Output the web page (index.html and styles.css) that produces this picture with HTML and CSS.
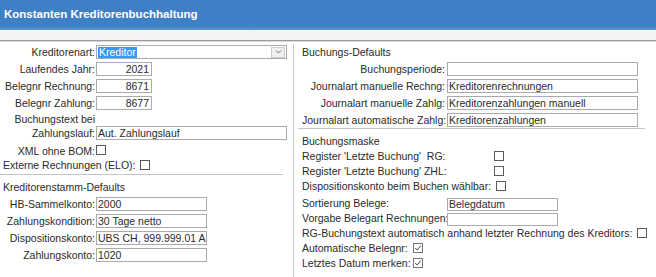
FILE: index.html
```html
<!DOCTYPE html>
<html lang="de">
<head>
    <meta charset="UTF-8">
    <meta name="viewport" content="width=device-width, initial-scale=1.0">
    <title>Konstanten Kreditorenbuchhaltung</title>
    <link rel="stylesheet" href="styles.css">
</head>
<body>
    <div class="titlebar">
        <h1>Konstanten Kreditorenbuchhaltung</h1>
    </div>
    <div class="toolbar"></div>

    <div class="content">
        <div class="col-left">
            <div class="row row-select">
                <span class="lbl">Kreditorenart:</span>
                <div class="select">
                    <span class="sel-text">Kreditor</span>
                    <span class="sel-btn">
                        <svg width="11" height="8" viewBox="0 0 11 8"><path d="M3 2.5 L5.5 5 L8 2.5" fill="none" stroke="#6b6b6b" stroke-width="1"/></svg>
                    </span>
                </div>
            </div>
            <div class="row">
                <span class="lbl">Laufendes Jahr:</span>
                <input class="field w-num" value="2021">
            </div>
            <div class="row">
                <span class="lbl">Belegnr Rechnung:</span>
                <input class="field w-num" value="8671">
            </div>
            <div class="row">
                <span class="lbl">Belegnr Zahlung:</span>
                <input class="field w-num" value="8677">
            </div>
            <div class="row row-tall">
                <span class="lbl">Buchungstext bei<br>Zahlungslauf:</span>
                <input class="field w-full" value="Aut. Zahlungslauf">
            </div>
            <div class="row row-cb first-cb">
                <span class="lbl">XML ohne BOM:</span>
                <span class="cb"></span>
            </div>
            <div class="line plain">Externe Rechnungen (ELO): <span class="cb gap"></span></div>

            <div class="sep sep-left"></div>

            <div class="heading heading-left">Kreditorenstamm-Defaults</div>
            <div class="row">
                <span class="lbl">HB-Sammelkonto:</span>
                <input class="field w-mid" value="2000">
            </div>
            <div class="row">
                <span class="lbl">Zahlungskondition:</span>
                <input class="field w-mid" value="30 Tage netto">
            </div>
            <div class="row">
                <span class="lbl">Dispositionskonto:</span>
                <input class="field w-mid" value="UBS CH, 999.999.01 A">
            </div>
            <div class="row">
                <span class="lbl">Zahlungskonto:</span>
                <input class="field w-mid" value="1020">
            </div>
        </div>

        <div class="col-right">
            <div class="heading">Buchungs-Defaults</div>
            <div class="row">
                <span class="lbl lbl-wide">Buchungsperiode:</span>
                <input class="field w-full" value="">
            </div>
            <div class="row">
                <span class="lbl lbl-wide">Journalart manuelle Rechng:</span>
                <input class="field w-full" value="Kreditorenrechnungen">
            </div>
            <div class="row">
                <span class="lbl lbl-wide">Journalart manuelle Zahlg:</span>
                <input class="field w-full" value="Kreditorenzahlungen manuell">
            </div>
            <div class="row">
                <span class="lbl lbl-wide">Journalart automatische Zahlg:</span>
                <input class="field w-full" value="Kreditorenzahlungen">
            </div>

            <div class="sep sep-right"></div>

            <div class="heading heading-mask">Buchungsmaske</div>
            <div class="line first-line"><span class="mlbl">Register 'Letzte Buchung'&nbsp; RG:</span><span class="cb"></span></div>
            <div class="line"><span class="mlbl">Register 'Letzte Buchung' ZHL:</span><span class="cb"></span></div>
            <div class="line">Dispositionskonto beim Buchen wählbar: <span class="cb gap"></span></div>
            <div class="line line-input first-input"><span class="ilbl">Sortierung Belege:</span><input class="field w-mid short" value="Belegdatum"></div>
            <div class="line"><span class="ilbl">Vorgabe Belegart Rechnungen:</span><input class="field w-mid short" value=""></div>
            <div class="line">RG-Buchungstext automatisch anhand letzter Rechnung des Kreditors: <span class="cb gap"></span></div>
            <div class="line">Automatische Belegnr: <span class="cb checked"><svg width="8" height="8" viewBox="0 0 8 8"><path d="M1.2 4 L3.2 6 L6.8 1.6" fill="none" stroke="#444" stroke-width="1"/></svg></span></div>
            <div class="line">Letztes Datum merken:<span class="cb checked"><svg width="8" height="8" viewBox="0 0 8 8"><path d="M1.2 4 L3.2 6 L6.8 1.6" fill="none" stroke="#444" stroke-width="1"/></svg></span></div>
        </div>
    </div>
</body>
</html>
```

FILE: styles.css
```css
body {
    margin: 0;
    font-family: "Liberation Sans", Arial, sans-serif;
    font-size: 10.5px;
    color: #2a2a2a;
    background: #fff;
}
.titlebar {
    height: 30px;
    box-sizing: border-box;
    padding: 0 0 2px 4px;
    display: flex;
    align-items: center;
    background: linear-gradient(#3e7fc5 0, #3e7fc5 26px, #6196cf 30px);
}
.titlebar h1 {
    margin: 0;
    font-size: 11.5px;
    font-weight: bold;
    color: #fff;
}
.toolbar {
    height: 10px;
    background: #f3f3f3;
    border-bottom: 1px solid #9b9b9b;
    box-shadow: 0 1px 0 #dadada;
}
.content {
    display: flex;
    box-sizing: border-box;
    height: 236px;
    padding-top: 3px;
}
.col-left {
    width: 293px;
    flex-shrink: 0;
}
.col-right {
    flex: 1;
    border-left: 1px solid #cacaca;
    padding-left: 8px;
}
.row {
    display: flex;
    align-items: center;
    height: 17px;
    white-space: nowrap;
}
.lbl {
    width: 95px;
    flex-shrink: 0;
    margin-right: 1px;
    text-align: right;
}
.lbl-wide {
    width: 143px;
    margin-right: 2px;
}
.row-select {
    height: 16px;
}
.row-tall {
    height: 29px;
    align-items: flex-end;
}
.row-tall .lbl {
    line-height: 14px;
}
.row-cb {
    height: 15px;
}
.first-cb {
    margin-top: 3px;
}
.line {
    height: 15px;
    line-height: 15px;
    white-space: nowrap;
}
.plain {
    padding-left: 3px;
}
.field {
    box-sizing: border-box;
    height: 14px;
    margin: 0;
    padding: 0 2px 0 1px;
    border: 1px solid #ababab;
    font: inherit;
    color: #2a2a2a;
    background: #fff;
    outline: none;
    vertical-align: middle;
}
.field.short {
    height: 13px;
}
.w-num {
    width: 56px;
    text-align: right;
}
.w-mid {
    width: 111px;
    padding-right: 0;
}
.w-full {
    width: 191px;
}
.select {
    display: flex;
    align-items: center;
    box-sizing: border-box;
    width: 191px;
    height: 14px;
    border: 1px solid #ababab;
    background: #fff;
}
.sel-text {
    margin-left: 1px;
    padding: 0 1px;
    line-height: 11px;
    background: #3399ff;
    color: #fff;
}
.sel-btn {
    display: flex;
    align-items: center;
    justify-content: center;
    box-sizing: border-box;
    width: 14px;
    height: 11px;
    margin-left: auto;
    margin-right: 1px;
    border: 1px solid #cdcdcd;
    background: #efefef;
}
.cb {
    display: inline-flex;
    align-items: center;
    justify-content: center;
    box-sizing: border-box;
    width: 10px;
    height: 10px;
    border: 1px solid #5a5a5a;
    background: #fff;
    vertical-align: middle;
    position: relative;
    top: -1px;
}
.cb.gap {
    margin-left: 2px;
}
.cb.checked {
    margin-left: 2px;
    border-color: #777;
}
.sep {
    height: 0;
    border-top: 1px solid #c4c4c4;
}
.sep-left {
    margin: 1px 10px 0 0;
}
.sep-right {
    margin: 0 11px 0 -4px;
}
.heading {
    display: flex;
    align-items: center;
    height: 16px;
}
.heading-left {
    margin-top: 4px;
    padding-left: 3px;
}
.heading-mask {
    height: 15px;
    margin-top: 4px;
}
.first-line {
    margin-top: 1px;
}
.line-input {
    height: 16px;
    line-height: 16px;
}
.first-input {
    margin-top: 1px;
}
.mlbl {
    display: inline-block;
    width: 192px;
}
.ilbl {
    display: inline-block;
    width: 145px;
}
```
